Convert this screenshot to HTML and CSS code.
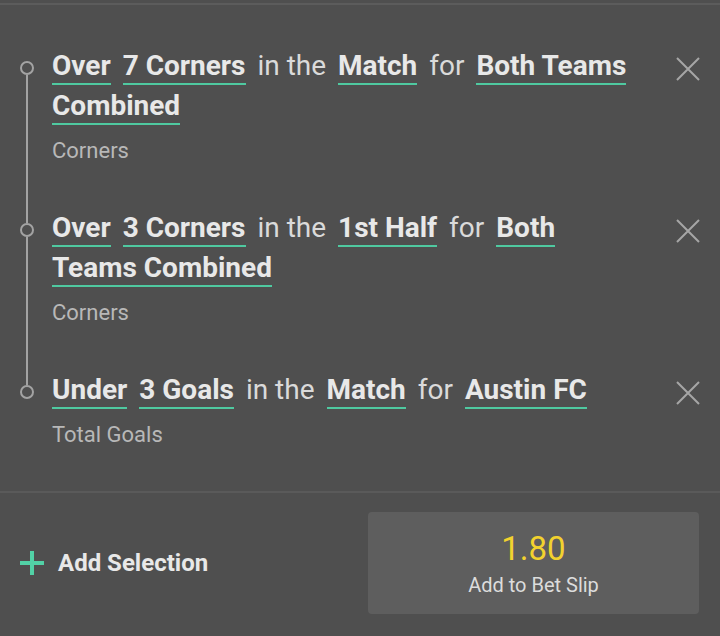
FILE: index.html
```html
<!DOCTYPE html>
<html lang="en">
<head>
<meta charset="utf-8">
<title>Bet Builder</title>
<link rel="stylesheet" href="styles.css">
</head>
<body>
<div class="panel">
  <ul class="legs">
    <li class="leg leg-first">
      <div class="rail"><span class="rail-top"></span><span class="dot"></span><span class="rail-bottom"></span></div>
      <div class="leg-body">
        <p class="leg-title"><span class="pick">Over</span> <span class="pick">7 Corners</span> <span class="word">in the</span> <span class="pick">Match</span> <span class="word">for</span> <span class="pick">Both Teams</span> <span class="pick">Combined</span></p>
        <p class="leg-market">Corners</p>
      </div>
      <button class="remove" aria-label="Remove"><svg viewBox="0 0 24 24" width="24" height="24"><path d="M1 1L23 23M23 1L1 23"/></svg></button>
    </li>
    <li class="leg">
      <div class="rail"><span class="rail-top"></span><span class="dot"></span><span class="rail-bottom"></span></div>
      <div class="leg-body">
        <p class="leg-title"><span class="pick">Over</span> <span class="pick">3 Corners</span> <span class="word">in the</span> <span class="pick">1st Half</span> <span class="word">for</span> <span class="pick">Both</span> <span class="pick">Teams Combined</span></p>
        <p class="leg-market">Corners</p>
      </div>
      <button class="remove" aria-label="Remove"><svg viewBox="0 0 24 24" width="24" height="24"><path d="M1 1L23 23M23 1L1 23"/></svg></button>
    </li>
    <li class="leg leg-last">
      <div class="rail"><span class="rail-top"></span><span class="dot"></span><span class="rail-bottom"></span></div>
      <div class="leg-body">
        <p class="leg-title"><span class="pick">Under</span> <span class="pick">3 Goals</span> <span class="word">in the</span> <span class="pick">Match</span> <span class="word">for</span> <span class="pick">Austin FC</span></p>
        <p class="leg-market">Total Goals</p>
      </div>
      <button class="remove" aria-label="Remove"><svg viewBox="0 0 24 24" width="24" height="24"><path d="M1 1L23 23M23 1L1 23"/></svg></button>
    </li>
  </ul>
  <div class="footer">
    <button class="add-selection"><svg viewBox="0 0 24 24" width="24" height="24"><path d="M12 0V24M0 12H24"/></svg><span>Add Selection</span></button>
    <button class="add-slip"><span class="odds">1.80</span><span class="slip-label">Add to Bet Slip</span></button>
  </div>
</div>
</body>
</html>
```

FILE: styles.css
```css
html, body {
  margin: 0;
  padding: 0;
  background: #4f4f4f;
}

body {
  font-family: Roboto, "Noto Sans", sans-serif;
  color: #e6e6e6;
  padding-top: 3px;
}

.panel {
  border-top: 2px solid #5c5c5c;
}

.legs {
  list-style: none;
  margin: 0;
  padding: 20px 0;
}

.leg {
  display: flex;
  padding: 0 20px;
}

.rail {
  width: 14px;
  display: flex;
  flex-direction: column;
  align-items: center;
  flex: none;
}

.rail-top {
  width: 2px;
  height: 36px;
  background: #a3a3a3;
}

.rail-bottom {
  width: 2px;
  flex: 1;
  background: #a3a3a3;
}

.leg-first .rail-top,
.leg-last .rail-bottom {
  background: transparent;
}

.dot {
  width: 14px;
  height: 14px;
  box-sizing: border-box;
  border: 2px solid #a3a3a3;
  border-radius: 50%;
  flex: none;
}

.leg-body {
  flex: 1;
  margin-left: 18px;
  padding: 21px 0;
}

.leg-title {
  margin: 0;
  font-size: 28px;
  line-height: 40px;
}

.pick {
  font-weight: 700;
  color: #e8e8e8;
  padding-bottom: 1px;
  border-bottom: 2px solid #4fc9a0;
  margin-right: 5px;
  white-space: nowrap;
}

.word {
  font-weight: 400;
  color: #dadada;
  margin-right: 5px;
}

.leg-market {
  margin: 10px 0 0;
  font-size: 22px;
  line-height: 30px;
  color: #b8b8b8;
}

.remove {
  flex: none;
  align-self: flex-start;
  margin: 32px 0 0 36px;
  padding: 0;
  border: 0;
  background: none;
  width: 24px;
  height: 24px;
}

.remove svg {
  display: block;
  fill: none;
  stroke: #a6a6a6;
  stroke-width: 2;
}

.footer {
  border-top: 2px solid #5a5a5a;
  display: flex;
  align-items: center;
  justify-content: space-between;
  padding: 19px 21px 22px 20px;
}

.add-selection {
  display: flex;
  align-items: center;
  gap: 14px;
  padding: 0;
  border: 0;
  background: none;
  font-family: Roboto, "Noto Sans", sans-serif;
  font-weight: 700;
  font-size: 24px;
  color: #e8e8e8;
}

.add-selection svg {
  display: block;
  fill: none;
  stroke: #52d1a6;
  stroke-width: 4;
}

.add-slip {
  width: 331px;
  height: 102px;
  border: 0;
  border-radius: 4px;
  background: #5e5e5e;
  display: flex;
  flex-direction: column;
  align-items: center;
  justify-content: center;
  padding: 0;
  font-family: Roboto, "Noto Sans", sans-serif;
}

.odds {
  font-size: 33px;
  line-height: 40px;
  color: #f2d22e;
  margin-bottom: 3px;
}

.slip-label {
  font-size: 20px;
  line-height: 26px;
  color: #dcdcdc;
}
```
